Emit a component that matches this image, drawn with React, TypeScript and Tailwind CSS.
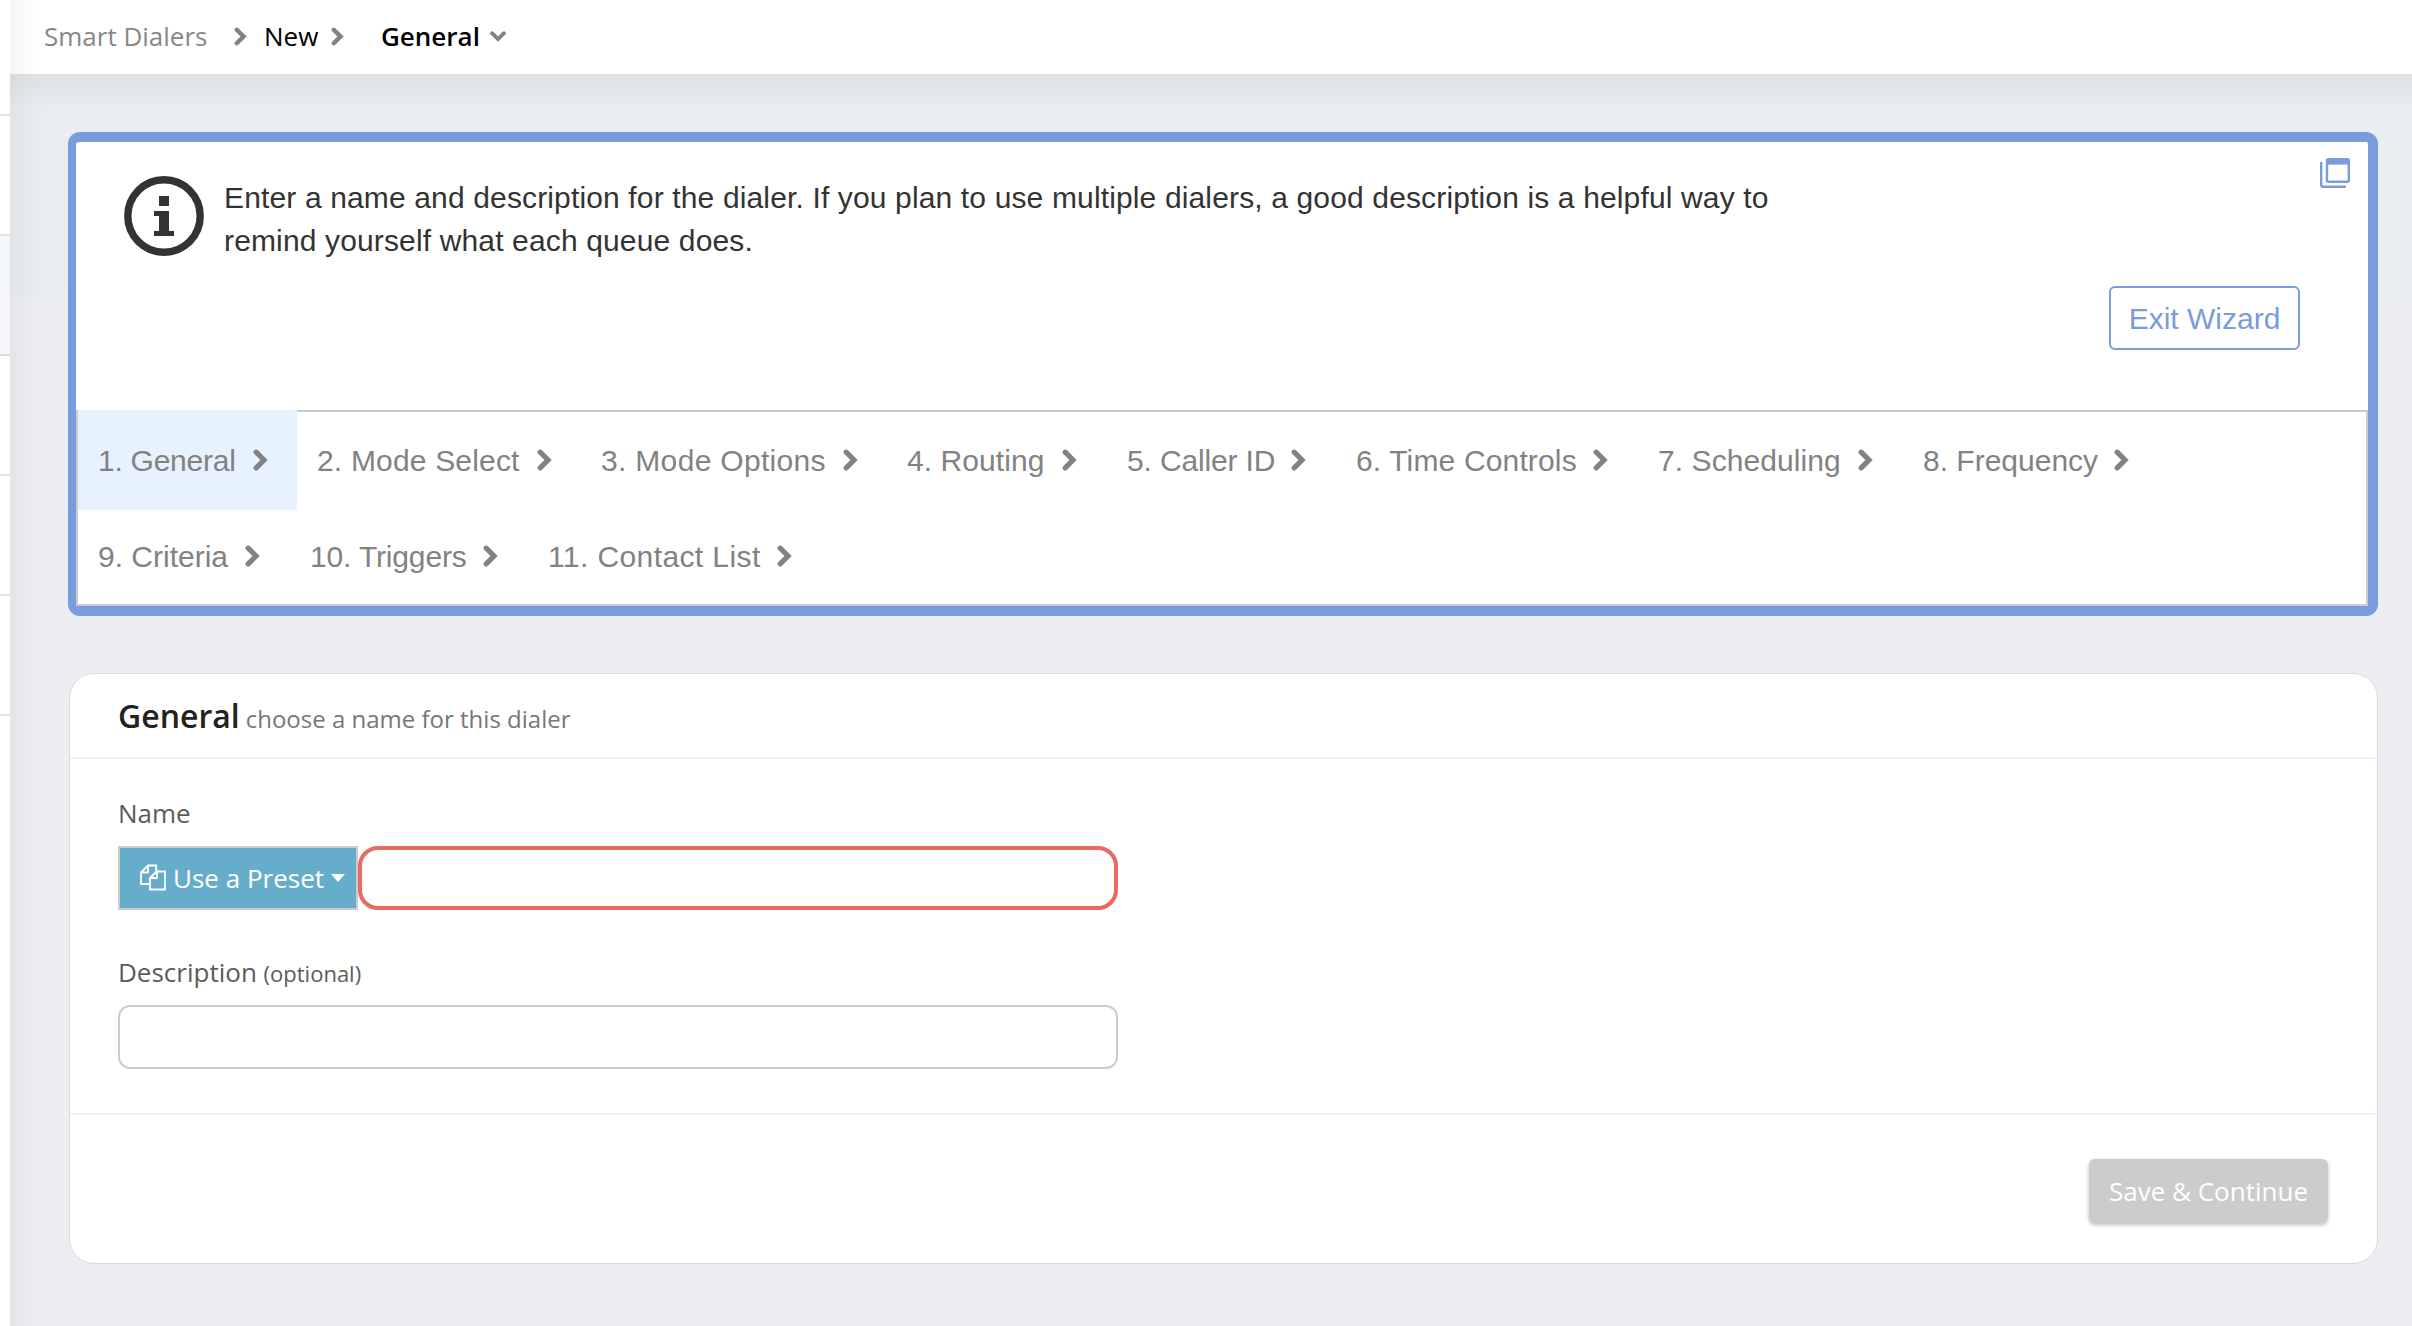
import React from "react";

const SANS = "font-['Liberation_Sans',Arial,sans-serif]";

function Chevron({ className = "" }: { className?: string }) {
  return (
    <svg viewBox="0 0 15 22" className={"h-[22px] w-[15px] shrink-0 " + className}>
      <path d="M3.2 3.2 11 11l-7.8 7.8" fill="none" stroke="#828282" strokeWidth="5.2" strokeLinecap="round" strokeLinejoin="miter" />
    </svg>
  );
}

type Step = { label: string; item: string; text: string };

const firstRow: Step[] = [
  { label: "1. General", item: "w-[219px] bg-[#e6f3ff]", text: "w-[155px] tracking-[-0.25px]" },
  { label: "2. Mode Select", item: "w-[284px]", text: "w-[220px] tracking-[0.18px]" },
  { label: "3. Mode Options", item: "w-[306px]", text: "w-[242px] tracking-[0.32px]" },
  { label: "4. Routing", item: "w-[219px]", text: "w-[155px] tracking-[0.08px]" },
  { label: "5. Caller ID", item: "w-[229px]", text: "w-[165px] pl-px tracking-[-0.15px]" },
  { label: "6. Time Controls", item: "w-[302px]", text: "w-[238px] pl-px tracking-[0.15px]" },
  { label: "7. Scheduling", item: "w-[265px]", text: "w-[201px] pl-px tracking-[0.08px]" },
  { label: "8. Frequency", item: "w-[256px]", text: "w-[192px] pl-px" },
];

const secondRow: Step[] = [
  { label: "9. Criteria", item: "w-[211px]", text: "w-[147px]" },
  { label: "10. Triggers", item: "w-[238px]", text: "w-[174px] pl-px tracking-[-0.15px]" },
  { label: "11. Contact List", item: "w-[294px]", text: "w-[230px] pl-px tracking-[0.4px]" },
];

function StepItem({ step, className }: { step: Step; className: string }) {
  return (
    <li className={"flex items-center pl-[20px] " + className + " " + step.item}>
      <span className={"shrink-0 whitespace-nowrap " + step.text}>{step.label}</span>
      <Chevron />
    </li>
  );
}

export default function App() {
  return (
    <div className="flex h-[1326px] w-[2412px] overflow-hidden bg-[#edeef2] font-['Open_Sans',sans-serif]">
      <aside className="flex w-[10px] shrink-0 flex-col bg-white">
        <div className="h-[116px] border-b-2 border-[#e3e3e5]" />
        <div className="h-[120px] border-b-2 border-[#e3e3e5]" />
        <div className="h-[120px] border-b-2 border-[#dcdcde] bg-[#f5f6f8]" />
        <div className="h-[120px] border-b-2 border-[#e3e3e5]" />
        <div className="h-[120px] border-b-2 border-[#e3e3e5]" />
        <div className="h-[120px] border-b-2 border-[#e3e3e5]" />
      </aside>

      <div className="relative flex grow flex-col">
        <header className="flex h-[74px] shrink-0 items-center bg-white pb-[2px] text-[26px] text-black">
          <span className="ml-[34px] w-[190px] whitespace-nowrap text-[#878787]">Smart Dialers</span>
          <Chevron className="h-[19px]! w-[13px]!" />
          <span className="ml-[17px] w-[67px]">New</span>
          <Chevron className="h-[19px]! w-[13px]!" />
          <span className="ml-[37px] w-[109px] font-semibold">General</span>
          <svg viewBox="0 0 16 12" className="mt-[2px] h-[12px] w-[16px]">
            <path d="M2 2.2 8 8l6-5.8" fill="none" stroke="#828282" strokeWidth="3.8" strokeLinecap="round" />
          </svg>
        </header>

        <main className="flex grow flex-col bg-[linear-gradient(#eaeef1,#eaeef1)] bg-[length:100%_219px] bg-no-repeat pl-[58px]">
          <section className={"mt-[58px] h-[484px] w-[2310px] rounded-[12px] border-y-10 border-r-10 border-l-8 border-[#7a9bdc] bg-white " + SANS}>
            <div className="flex h-[268px] text-[#333333]">
              <svg viewBox="0 0 80 80" className="mt-[34px] ml-[48px] size-[80px] shrink-0">
                <circle cx="40" cy="40" r="36.2" fill="none" stroke="#333" strokeWidth="7.4" />
                <path d="M35 20h10v10H35zM30 35h15v20h5v5H30v-5h5V40h-5z" fill="#333" />
              </svg>
              <p className="mt-[34px] ml-[20px] text-[30px] leading-[43px] tracking-[0.142px] whitespace-nowrap">
                Enter a name and description for the dialer. If you plan to use multiple dialers, a good description is a helpful way to
                <br />
                remind yourself what each queue does.
              </p>
              <div className="mr-[18px] ml-auto flex flex-col items-end">
                <svg viewBox="0 0 30 30" className="mt-[16px] size-[30px]">
                  <path d="M1.2 4v22.8q0 2 2 2H26" fill="none" stroke="#7a9bdc" strokeWidth="2.4" />
                  <rect x="7" y="1.2" width="21.8" height="22.6" rx="1.5" fill="none" stroke="#7a9bdc" strokeWidth="2.4" />
                  <path d="M7 1h22v5.6H7z" fill="#7a9bdc" />
                </svg>
                <button className="mt-[98px] mr-[50px] h-[64px] w-[191px] rounded-[6px] border-2 border-[#7a9bdc] text-[30px] whitespace-nowrap text-[#7a9bdc]">
                  Exit Wizard
                </button>
              </div>
            </div>
            <div className="h-[196px] border-2 border-[#cccccc] text-[30px] text-[#828282]">
              <ul className="flex h-[96px]">
                {firstRow.map((s) => (
                  <StepItem key={s.label} step={s} className="-mt-[2px] h-[100px]" />
                ))}
              </ul>
              <ul className="flex h-[96px]">
                {secondRow.map((s) => (
                  <StepItem key={s.label} step={s} className="h-[96px]" />
                ))}
              </ul>
            </div>
          </section>

          <section className="mt-[57px] ml-[1px] flex h-[591px] w-[2309px] flex-col rounded-[25px] border border-[#d8dadd] bg-white">
            <div className="flex h-[85px] items-baseline border-b-2 border-[#eff2fd] pt-[18px] pl-[48px] leading-[48px]">
              <h1 className="text-[32px] font-semibold text-[#222]">General</h1>
              <small className="ml-[6px] text-[24px] text-[#777]">choose a name for this dialer</small>
            </div>
            <div className="flex h-[356px] flex-col border-b-2 border-[#eff2fd] pt-[35px] pl-[48px] text-[26px] text-[#5c5c5c]">
              <label className="leading-[38px]">Name</label>
              <div className="mt-[14px] flex h-[64px]">
                <button className="flex w-[240px] items-center border-2 border-[#ccc] bg-[#66adcc] pl-[20px] whitespace-nowrap text-white">
                  <svg viewBox="0 0 26 26" className="-mt-[2px] h-[27px] w-[26px]" fill="none" stroke="white" strokeWidth="1.8" strokeLinejoin="round">
                    <path d="M10 19.5H1V8l7-7h8.2v6M8 1v7H1" />
                    <path d="M16.5 7H25v18H10V13.5zM17 7v6.5h-7" />
                  </svg>
                  <span className="ml-[7px] w-[151px] text-left">Use a Preset</span>
                  <span className="-mt-[1px] ml-[7px] border-x-[7.5px] border-t-8 border-x-transparent border-t-white" />
                </button>
                <input className="w-[760px] rounded-[20px] border-4 border-[#ea6962] bg-white outline-none" />
              </div>
              <label className="mt-[43px] h-[38px] leading-[38px]">
                Description <small className="text-[22px] leading-none">(optional)</small>
              </label>
              <input className="mt-[14px] h-[64px] w-[1000px] rounded-[12px] border-2 border-[#ccc] bg-white outline-none" />
            </div>
            <div className="flex justify-end pt-[44px] pr-[49px]">
              <button className="h-[64px] w-[239px] rounded-[6px] bg-[#ccc] text-[26px] whitespace-nowrap text-white shadow-[0_2px_4px_rgba(0,0,0,0.25)]">
                Save &amp; Continue
              </button>
            </div>
          </section>
        </main>

        {/* Shadows cast by the top bar and the side bar */}
        <div className="pointer-events-none absolute inset-x-0 top-[74px] h-[38px] bg-linear-to-b from-black/5 to-transparent" />
        <div className="pointer-events-none absolute inset-y-0 left-0 w-[34px] bg-linear-to-r from-black/4 to-transparent" />
      </div>
    </div>
  );
}
